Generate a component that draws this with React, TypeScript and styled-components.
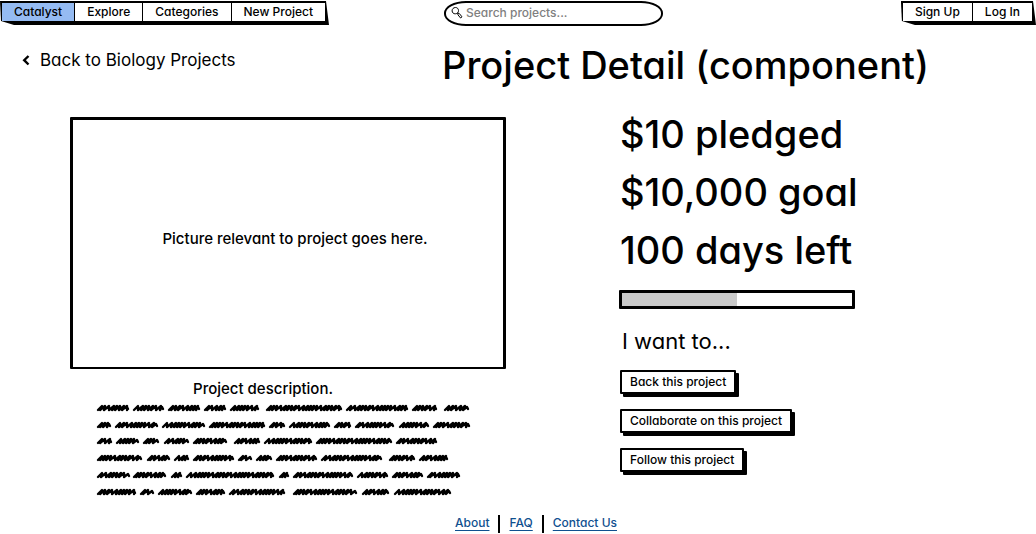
import React from "react";
import styled, { createGlobalStyle } from "styled-components";

const Global = createGlobalStyle`
  *, *::before, *::after { box-sizing: border-box; }
  body {
    margin: 0;
    background: #fff;
    color: #000;
    font-family: Inter, "Open Sans", sans-serif;
    font-feature-settings: "cv11";
    font-size: 12px;
    font-weight: 500;
    line-height: 18px;
  }
  button, input { font: inherit; color: inherit; font-feature-settings: inherit; }
  a { color: inherit; text-decoration: none; }
  h1, h2, p, ul, figure { margin: 0; padding: 0; }
`;

const Header = styled.header`
  display: flex;
  align-items: flex-start;
  padding-top: 1px;
`;

const Bar = styled.nav`
  display: flex;
  gap: 1px;
  padding: 2px 4px 4px 2px;
  background: #000;
  clip-path: polygon(0 0, calc(100% - 3px) 0, 100% 100%, 14px 100%, 1px calc(100% - 4px));
`;

const BarItem = styled.a<{ $active?: boolean }>`
  padding: 0 12px;
  background: ${(p) => (p.$active ? "#95bbf2" : "#fff")};
`;

const SearchBox = styled.label`
  display: flex;
  align-items: center;
  flex: 0 1 219px;
  min-width: 0;
  height: 25px;
  margin: 0 auto 0 115px;
  padding: 0 6px 2px 5px;
  border: 2px solid #000;
  border-radius: 22px / 12px;
`;

const SearchField = styled.input`
  flex: 1;
  min-width: 0;
  padding: 0 0 0 3px;
  border: 0;
  outline: 0;
  background: transparent;
  &::placeholder { color: #808080; opacity: 1; }
`;

const TitleRow = styled.div`
  display: grid;
  grid-template-columns: 420px 1fr;
  align-items: center;
  padding: 15px 22px 0;
`;

const BackLink = styled.a`
  display: flex;
  align-items: center;
  gap: 10px;
  padding-bottom: 10px;
  font-size: 17px;
  font-weight: 400;
  line-height: 24px;
`;

const Title = styled.h1`
  font-size: 38px;
  font-weight: 500;
  line-height: 48px;
`;

const Columns = styled.main`
  display: grid;
  grid-template-columns: 1fr 416px;
  align-items: start;
  padding-top: 16px;
`;

const Project = styled.section`
  margin: 12px 114px 0 70px;
`;

const Picture = styled.figure`
  display: grid;
  place-items: center;
  min-height: 252px;
  padding: 0 0 10px 14px;
  border: 3px solid #000;
  border-bottom-width: 2px;
  border-radius: 1px;
  font-size: 15px;
`;

const DescriptionTitle = styled.h2`
  margin: 9px 0 1px;
  padding-right: 50px;
  font-size: 15px;
  font-weight: 500;
  line-height: 22px;
  text-align: center;
`;

const Scribble = styled.svg`
  display: block;
  margin-left: 25px;
`;

const Stat = styled.p`
  font-size: 38px;
  font-weight: 500;
  line-height: 58px;
`;

const Meter = styled.progress`
  display: block;
  appearance: none;
  width: 236px;
  height: 19px;
  margin: 11px 0 0 -1px;
  border: 3px solid #000;
  border-radius: 1px;
  background: #fff;
  &::-webkit-progress-bar { background: #fff; }
  &::-webkit-progress-value { background: #cacaca; }
`;

const Prompt = styled.h2`
  margin: 17px 0 14px;
  padding-left: 2px;
  font-size: 22px;
  font-weight: 400;
  line-height: 30px;
`;

const Actions = styled.div`
  display: flex;
  flex-direction: column;
  align-items: flex-start;
  gap: 15px;
`;

const Action = styled.button`
  padding: 1px 8px;
  border: 2px solid #000;
  border-radius: 1px;
  background: #fff;
  box-shadow: 3px 3px 0 #000;
  cursor: pointer;
`;

const Footer = styled.footer`
  display: flex;
  justify-content: center;
  padding: 16px 0 0 36px;
`;

const FooterLink = styled.a`
  margin: 0 9px;
  color: #10508f;
  line-height: 16px;
  text-decoration: underline;
  text-underline-offset: 3px;
`;

const Divider = styled.span`
  width: 2px;
  height: 18px;
  background: #000;
`;

const lines = [
  { y: 7, words: [[97, 128], [133, 163], [168, 199], [204, 225], [230, 258], [266, 341], [346, 407], [412, 436], [444, 468]] },
  { y: 24, words: [[97, 110], [115, 157], [162, 204], [209, 264], [269, 284], [289, 329], [334, 350], [355, 393], [399, 428], [433, 469]] },
  { y: 40, words: [[97, 111], [116, 138], [143, 158], [164, 188], [193, 226], [234, 259], [264, 311], [316, 391], [396, 436]] },
  { y: 57, words: [[97, 141], [147, 169], [174, 188], [193, 233], [238, 251], [256, 271], [276, 316], [321, 381], [389, 414], [419, 447]] },
  { y: 74, words: [[97, 129], [133, 165], [171, 181], [186, 273], [279, 288], [293, 352], [357, 387], [392, 422], [427, 459]] },
  { y: 91, words: [[97, 135], [140, 153], [158, 191], [196, 224], [229, 284], [293, 356], [362, 388], [394, 450]] },
];

const strides = [3, 4, 5, 3, 3, 4, 3, 5, 4, 3, 3];

function wordPath(from: number, to: number, y: number, seed: number) {
  let x = from - 94;
  let i = seed;
  let d = `M${x} ${y + 2}`;
  while (x < to - 99) {
    const s = strides[i % strides.length];
    d += `L${x + 4} ${y - 2}L${x + s - 1} ${y + 2}`;
    x += s;
    i += 1;
  }
  return d + `L${to - 96} ${y - 1}L${to - 95} ${y + 1}`;
}

export default function App() {
  return (
    <>
      <Global />
      <Header>
        <Bar aria-label="Main">
          <BarItem href="#" $active>Catalyst</BarItem>
          <BarItem href="#">Explore</BarItem>
          <BarItem href="#">Categories</BarItem>
          <BarItem href="#">New Project</BarItem>
        </Bar>
        <SearchBox>
          <svg width="12" height="14" viewBox="0 0 12 14" fill="none" stroke="#000" aria-hidden="true">
            <path d="M4.5 1.5C2.4 1.5 1 3.1 1.1 4.9 1.2 6.8 2.6 7.9 4.4 7.8 6.4 7.7 7.6 6.3 7.5 4.5 7.4 2.7 6.3 1.5 4.5 1.5Z" />
            <path d="M6.6 7.2 8.2 7.4 11 10.8 9.6 12 7 8.9Z" strokeLinejoin="round" />
          </svg>
          <SearchField type="search" placeholder="Search projects..." aria-label="Search projects" />
        </SearchBox>
        <Bar aria-label="Account">
          <BarItem href="#">Sign Up</BarItem>
          <BarItem href="#">Log In</BarItem>
        </Bar>
      </Header>
      <TitleRow>
        <BackLink href="#">
          <svg width="8" height="12" viewBox="0 0 8 12" fill="none" stroke="#000" strokeWidth="2.4" aria-hidden="true">
            <path d="M6.5 2 2.2 6.2 6.5 10.5" />
          </svg>
          Back to Biology Projects
        </BackLink>
        <Title>Project Detail (component)</Title>
      </TitleRow>
      <Columns>
        <Project>
          <Picture>Picture relevant to project goes here.</Picture>
          <DescriptionTitle>Project description.</DescriptionTitle>
          <Scribble width="378" height="98" viewBox="0 0 378 98" fill="none" stroke="#000" strokeWidth="2.4" strokeLinecap="round" strokeLinejoin="round" role="img" aria-label="Project description">
            {lines.map((line, l) =>
              line.words.map(([from, to], w) => (
                <path key={`${l}-${w}`} d={wordPath(from, to, line.y, l * 3 + w * 2)} />
              ))
            )}
          </Scribble>
        </Project>
        <section>
          <Stat>$10 pledged</Stat>
          <Stat>$10,000 goal</Stat>
          <Stat>100 days left</Stat>
          <Meter value={50} max={100} aria-label="Funding progress" />
          <Prompt>I want to...</Prompt>
          <Actions>
            <Action type="button">Back this project</Action>
            <Action type="button">Collaborate on this project</Action>
            <Action type="button">Follow this project</Action>
          </Actions>
        </section>
      </Columns>
      <Footer>
        <FooterLink href="#">About</FooterLink>
        <Divider />
        <FooterLink href="#">FAQ</FooterLink>
        <Divider />
        <FooterLink href="#">Contact Us</FooterLink>
      </Footer>
    </>
  );
}
